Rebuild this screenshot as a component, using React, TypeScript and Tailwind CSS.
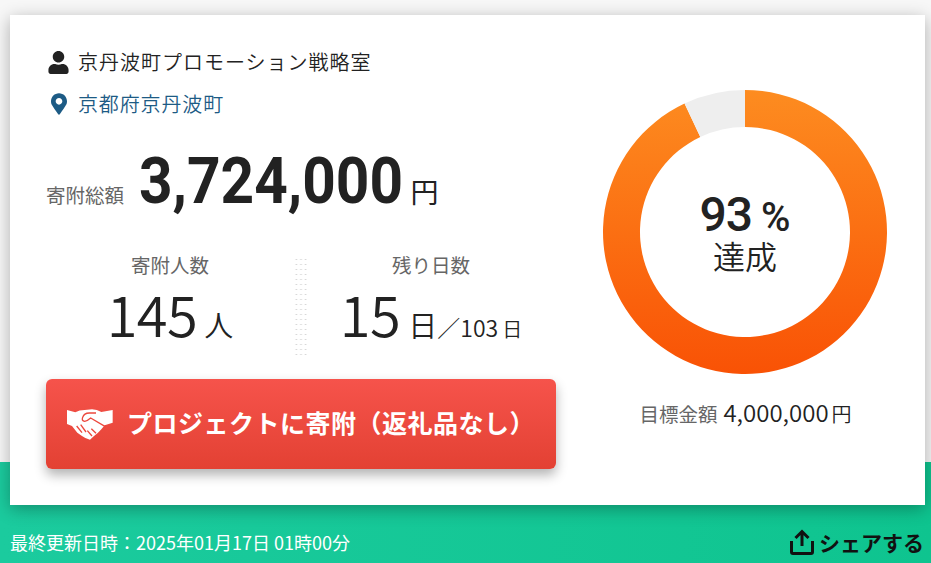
import { FaUser, FaMapMarkerAlt } from "react-icons/fa";

const font = '"Noto Sans CJK JP", "Noto Sans", sans-serif';

function Handshake() {
  return (
    <svg width="56" height="42" viewBox="0 0 168 126" className="shrink-0">
      <path
        d="M15 24L40 31Q52 24 68 24L90 22Q105 22 118 30L152 24V62L128 70L118 82L108 92L96 102L84 113L70 108L60 102L46 92L30 72L15 66Z"
        fill="#fff"
      />
      <path
        d="M102 33H82Q66 33 62 46Q58 57 68 58Q76 57 86 48L130 74M44 72L60 92M56 68L72 90M88 80L102 94M76 86L90 102"
        fill="none"
        stroke="#ec483d"
        strokeWidth="4"
        strokeLinejoin="round"
      />
    </svg>
  );
}

function Donut() {
  const cx = 143, cy = 143, R = 142, r = 105;
  const a = (25.2 * Math.PI) / 180;
  const ox = cx - R * Math.sin(a), oy = cy - R * Math.cos(a);
  const ix = cx - r * Math.sin(a), iy = cy - r * Math.cos(a);
  const orange = `M${cx} ${cy - R} A${R} ${R} 0 1 1 ${ox} ${oy} L${ix} ${iy} A${r} ${r} 0 1 0 ${cx} ${cy - r} Z`;
  const gray = `M${ox} ${oy} A${R} ${R} 0 0 1 ${cx} ${cy - R} L${cx} ${cy - r} A${r} ${r} 0 0 0 ${ix} ${iy} Z`;
  return (
    <svg width="286" height="286" viewBox="0 0 286 286" className="block">
      <defs>
        <linearGradient id="g" x1="0" y1="0" x2="0" y2="1">
          <stop offset="0" stopColor="#fd8c20" />
          <stop offset="1" stopColor="#f95205" />
        </linearGradient>
      </defs>
      <path d={orange} fill="url(#g)" />
      <path d={gray} fill="#eeeeee" />
    </svg>
  );
}

function Dots() {
  return (
    <div className="w-[14px] h-[100px] mt-[4px] bg-[radial-gradient(circle,#d4d4d4_0.8px,transparent_1px)] bg-[length:4.67px_5px]" />
  );
}

export default function App() {
  return (
    <div className="relative w-[931px] h-[563px] overflow-hidden bg-[#f7f7f7]" style={{ fontFamily: font }}>
      <div className="relative z-10 pt-[15px] pl-[10px]">
        <div className="relative w-[915px] h-[490px] bg-white shadow-[0_4px_16px_rgba(0,0,0,0.3)] flex pl-[36px]">
          <div className="w-[510px] flex flex-col">
            <div className="flex items-center h-[24px] mt-[35px] pl-[2px] text-[20px] tracking-[1px] text-[#222] gap-[9px] leading-none font-[350]">
              <FaUser className="w-[21px] h-[23px] text-[#222]" />
              <span>京丹波町プロモーション戦略室</span>
            </div>
            <div className="flex items-center h-[24px] mt-[18px] pl-[5px] text-[20px] tracking-[0.86px] text-[#1d5b85] gap-[11px] leading-none font-[350]">
              <FaMapMarkerAlt className="w-[16px] h-[22px]" />
              <span>京都府京丹波町</span>
            </div>
            <div className="flex items-baseline mt-[30px] h-[72px]">
              <span className="text-[19.5px] text-[#666]">寄附総額</span>
              <span className="ml-[15px] -mr-[24px] text-[64px] font-bold text-[#222] leading-[72px] font-['Roboto'] inline-block origin-left scale-x-[0.915]">3,724,000</span>
              <span className="ml-[7px] text-[28px] text-[#222]">円</span>
            </div>
            <div className="flex items-start mt-[35px] h-[100px]">
              <div className="w-[248px] flex flex-col items-center text-[#222]">
                <span className="text-[19.5px] leading-[24px] text-[#666]">寄附人数</span>
                <div className="flex items-baseline mt-[6px] leading-[60px]">
                  <span className="text-[56px] font-[350] tracking-[-0.5px]">145</span>
                  <span className="ml-[7px] text-[29px] font-[350]">人</span>
                </div>
              </div>
              <Dots />
              <div className="flex-1 flex flex-col items-center text-[#222] pr-[2px]">
                <span className="text-[19.5px] leading-[24px] text-[#666]">残り日数</span>
                <div className="flex items-baseline mt-[6px] leading-[60px]">
                  <span className="text-[56px] font-[350] tracking-[-0.5px]">15</span>
                  <span className="ml-[8px] text-[29px] font-[350]">日</span>
                  <span className="text-[23px] font-[350]">／103</span>
                  <span className="ml-[4px] text-[20px] font-[350]">日</span>
                </div>
              </div>
            </div>
            <button className="mt-[26px] h-[90px] rounded-[6px] bg-gradient-to-b from-[#f6534b] to-[#e34133] shadow-[0_6px_12px_rgba(0,0,0,0.3)] flex items-center pl-[16px] pb-[3px] text-white font-bold text-[25px] tracking-[0.5px] gap-[9px]">
              <Handshake />
              <span>プロジェクトに寄附（返礼品なし）</span>
            </button>
          </div>
          <div className="w-[286px] ml-[46px] mt-[74px] flex flex-col items-center">
            <div className="relative w-[286px] h-[286px]">
              <Donut />
              <div className="absolute inset-0 flex flex-col items-center justify-center text-[#222]">
                <div className="flex items-baseline font-medium leading-[42px] font-['Roboto']">
                  <span className="text-[48px] tracking-[-1px]">93</span>
                  <span className="ml-[9px] text-[40px]">%</span>
                </div>
                <span className="text-[32px] font-[350] leading-[32px]">達成</span>
              </div>
            </div>
            <div className="flex items-baseline mt-[21px] leading-[32px] ml-[1px]">
              <span className="text-[19.5px] text-[#666]">目標金額</span>
              <span className="ml-[6px] text-[24px] font-[350] text-[#222]">4,000,000</span>
              <span className="ml-[3px] text-[20px] font-[350] text-[#222]">円</span>
            </div>
          </div>
        </div>
      </div>
      <div className="absolute left-0 right-0 bottom-0 h-[101px] bg-gradient-to-r from-[#1bcb9e] to-[#0ec48f] flex items-end justify-between pl-[10px] pr-[7px] pb-[7px]">
        <span className="text-[18px] text-white leading-[28px]">最終更新日時：2025年01月17日 01時00分</span>
        <div className="flex items-center gap-[5px] text-[#111] font-bold text-[21px] leading-[28px]">
          <svg width="24" height="26" viewBox="0 0 24 26" fill="none" stroke="#111" strokeWidth="3">
            <path d="M12 17V3M5.5 9L12 2.5L18.5 9M1.5 12V23Q1.5 24.5 3 24.5H21Q22.5 24.5 22.5 23V12" />
          </svg>
          <span>シェアする</span>
        </div>
      </div>
    </div>
  );
}
